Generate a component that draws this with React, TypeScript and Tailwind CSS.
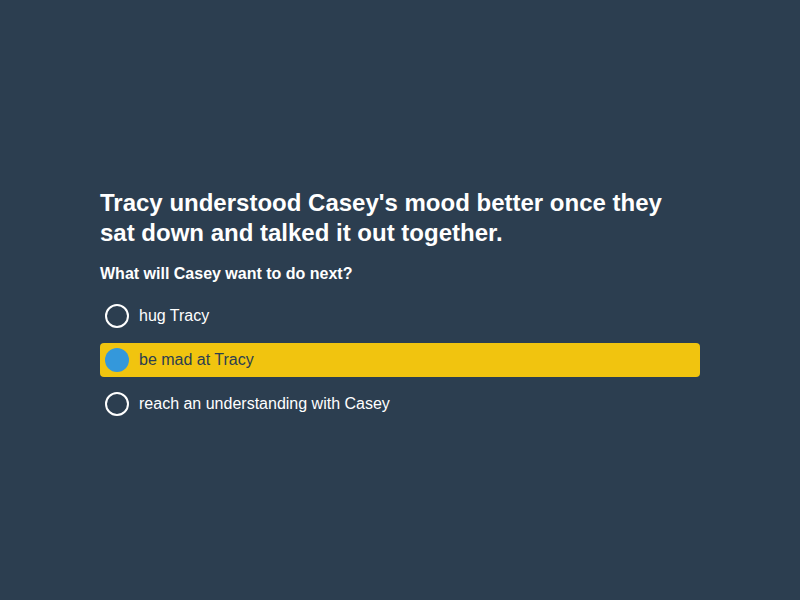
export default function App() {
  const options = ["hug Tracy", "be mad at Tracy", "reach an understanding with Casey"];
  const selected = 1;
  return (
    <div className="h-[600px] w-full bg-[#2c3e50] flex justify-center pt-[188px] font-['Liberation_Sans',Arial,sans-serif]">
      <div className="w-[600px]">
        <h1 className="text-[24px] leading-[30px] font-bold text-white">
          Tracy understood Casey's mood better once they sat down and talked it out together.
        </h1>
        <p className="mt-[14px] text-[16px] font-bold text-white">What will Casey want to do next?</p>
        <div className="mt-[13px] flex flex-col gap-[10px]">
          {options.map((opt, i) => (
            <div
              key={opt}
              className={
                i === selected
                  ? "h-[34px] flex items-center px-[5px] rounded-[4px] bg-[#f1c40f] text-[#2c3e50]"
                  : "h-[34px] flex items-center px-[5px] rounded-[4px] text-white"
              }
            >
              {i === selected ? (
                <span className="w-[24px] h-[24px] rounded-full bg-[#3498db]" />
              ) : (
                <span className="w-[24px] h-[24px] rounded-full border-2 border-white" />
              )}
              <span className="ml-[10px] text-[16px]">{opt}</span>
            </div>
          ))}
        </div>
      </div>
    </div>
  );
}
